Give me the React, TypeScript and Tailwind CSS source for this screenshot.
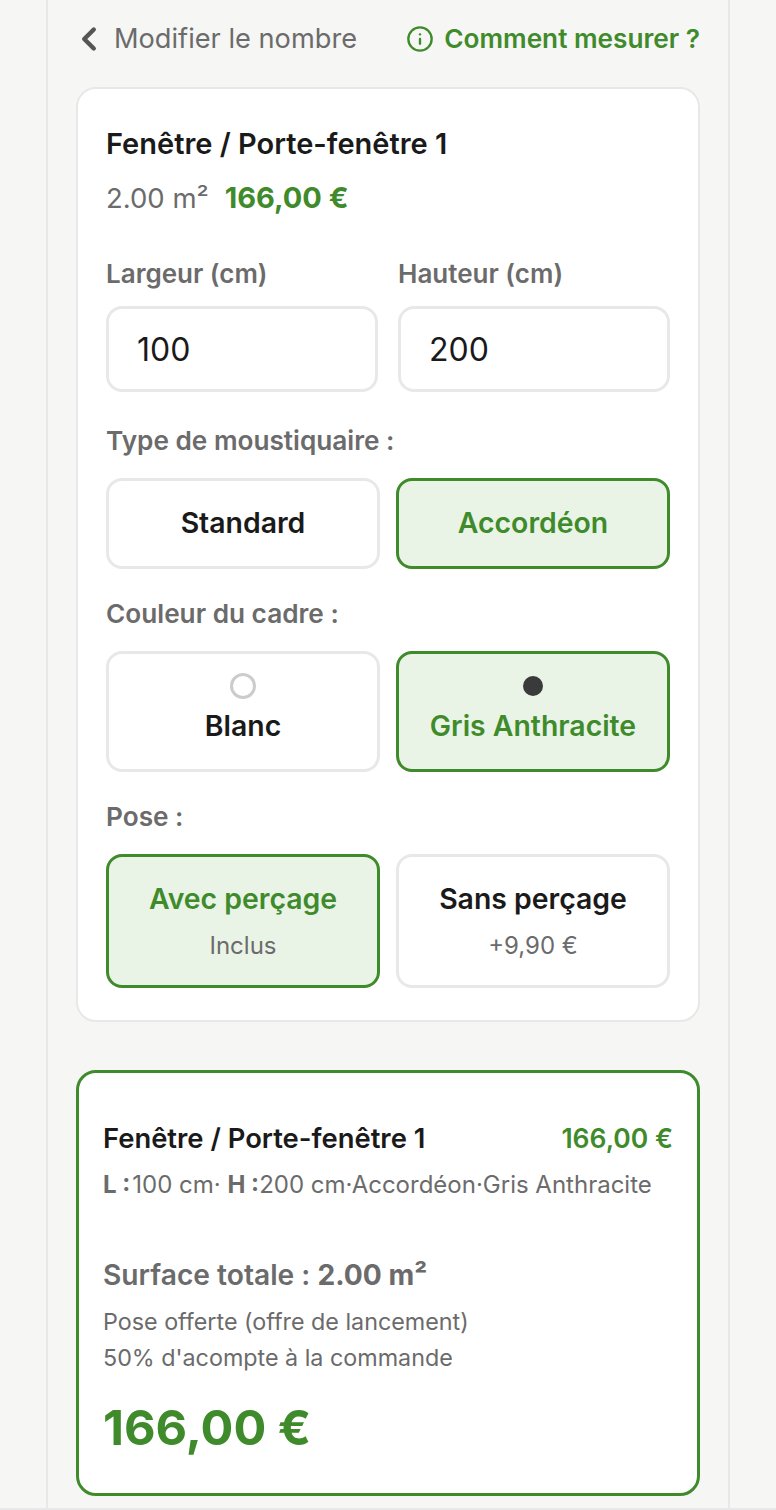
import { ChevronLeft, Info } from "lucide-react";

const optionBase = "flex flex-1 flex-col items-center justify-center rounded-[16px] border-[3px]";
const optionOn = "border-[#3f8b2c] bg-[#e9f4e7] text-[#3f8b2c]";
const optionOff = "border-[#e8e8e8] bg-white text-[#1a1a1a]";

function Option({ on, height, children }: { on: boolean; height: string; children: React.ReactNode }) {
  return <div className={`${optionBase} ${height} ${on ? optionOn : optionOff}`}>{children}</div>;
}

function Field({ label, value }: { label: string; value: string }) {
  return (
    <div className="flex flex-1 flex-col">
      <label className="h-[36px] text-[26px] leading-[36px] font-semibold text-[#6b6b6b]">{label}</label>
      <div className="mt-[14px] flex h-[86px] items-center rounded-[16px] border-[3px] border-[#e8e8e8] bg-white pt-[2px] pl-[28px] text-[32px] text-[#1a1a1a]">
        {value}
      </div>
    </div>
  );
}

function SectionLabel({ children }: { children: React.ReactNode }) {
  return <p className="h-[36px] text-[26.2px] leading-[36px] font-semibold text-[#6b6b6b]">{children}</p>;
}

export default function App() {
  return (
    <div className="h-[1510px] overflow-hidden border-b-2 border-[#e8e8e8] bg-[#f6f6f4] font-['Inter',sans-serif]">
      <div className="mx-auto flex h-full w-[684px] flex-col border-x-2 border-[#e8e8e8] px-[28px]">
        <div className="mt-[19px] flex h-[40px] items-center justify-between">
          <div className="-ml-[6px] flex items-center gap-[6px] text-[#6b6b6b]">
            <ChevronLeft size={38} strokeWidth={2.8} className="text-[#555555]" />
            <span className="text-[27.2px]">Modifier le nombre</span>
          </div>
          <div className="flex items-center gap-[10px] text-[#3f8b2c]">
            <Info size={28} strokeWidth={2} />
            <span className="text-[26.2px] font-semibold">Comment mesurer ?</span>
          </div>
        </div>

        <div className="mt-[28px] flex h-[935px] flex-col rounded-[20px] border-2 border-[#e8e8e8] bg-white px-[28px] pt-[35px]">
          <h2 className="h-[40px] text-[29px] leading-[40px] font-semibold text-[#1a1a1a]">Fenêtre / Porte-fenêtre 1</h2>
          <div className="mt-[14px] flex h-[40px] items-center gap-[16px]">
            <span className="pt-[2px] text-[27.5px] text-[#6b6b6b]">2.00 m²</span>
            <span className="text-[29px] font-bold text-[#3f8b2c]">166,00 €</span>
          </div>

          <div className="mt-[38px] flex gap-[20px]">
            <Field label="Largeur (cm)" value="100" />
            <Field label="Hauteur (cm)" value="200" />
          </div>

          <div className="mt-[31px]">
            <SectionLabel>Type de moustiquaire :</SectionLabel>
          </div>
          <div className="mt-[19px] flex gap-[16px]">
            <Option on={false} height="h-[91px]">
              <span className="text-[28.4px] font-semibold">Standard</span>
            </Option>
            <Option on height="h-[91px]">
              <span className="text-[28.4px] font-semibold">Accordéon</span>
            </Option>
          </div>

          <div className="mt-[27px]">
            <SectionLabel>Couleur du cadre :</SectionLabel>
          </div>
          <div className="mt-[19px] flex gap-[16px]">
            <Option on={false} height="h-[121px]">
              <span className="-mt-[2px] h-[26px] w-[26px] rounded-full border-[3px] border-[#cccccc] bg-white" />
              <span className="mt-[6px] text-[28.4px] font-semibold">Blanc</span>
            </Option>
            <Option on height="h-[121px]">
              <span className="-mt-[2px] mb-[3px] h-[20px] w-[20px] translate-y-[3px] rounded-full bg-[#3a3a3a]" />
              <span className="mt-[9px] text-[28.4px] font-semibold">Gris Anthracite</span>
            </Option>
          </div>

          <div className="mt-[27px]">
            <SectionLabel>Pose :</SectionLabel>
          </div>
          <div className="mt-[19px] flex gap-[16px]">
            <Option on height="h-[134px]">
              <span className="text-[28.4px] font-semibold">Avec perçage</span>
              <span className="mt-[7px] text-[24px] text-[#6b6b6b]">Inclus</span>
            </Option>
            <Option on={false} height="h-[134px]">
              <span className="text-[28.4px] font-semibold">Sans perçage</span>
              <span className="mt-[7px] text-[24px] text-[#6b6b6b]">+9,90 €</span>
            </Option>
          </div>
        </div>

        <div className="mt-[48px] flex h-[426px] flex-col rounded-[20px] border-[3px] border-[#3f8b2c] bg-white px-[24px] pt-[48px]">
          <div className="flex h-[36px] items-center justify-between">
            <span className="text-[27.4px] font-semibold text-[#1a1a1a]">Fenêtre / Porte-fenêtre 1</span>
            <span className="text-[26.5px] font-semibold text-[#3f8b2c]">166,00 €</span>
          </div>
          <p className="mt-[10px] h-[36px] text-[24px] leading-[36px] whitespace-nowrap text-[#6b6b6b]">
            <b className="mr-[2px] font-bold">L :</b>100 cm· <b className="font-bold">H :</b>200 cm·Accordéon·Gris Anthracite
          </p>
          <p className="mt-[52px] h-[40px] text-[28.2px] leading-[40px] font-semibold text-[#6b6b6b]">
            Surface totale : <b className="font-bold">2.00 m²</b>
          </p>
          <p className="mt-[9px] h-[36px] text-[23.3px] leading-[36px] text-[#6b6b6b]">Pose offerte (offre de lancement)</p>
          <p className="h-[36px] text-[23.3px] leading-[36px] text-[#6b6b6b]">50% d'acompte à la commande</p>
          <p className="mt-[22px] text-[48.7px] leading-[60px] font-bold text-[#3f8b2c]">166,00 €</p>
        </div>
      </div>
    </div>
  );
}
